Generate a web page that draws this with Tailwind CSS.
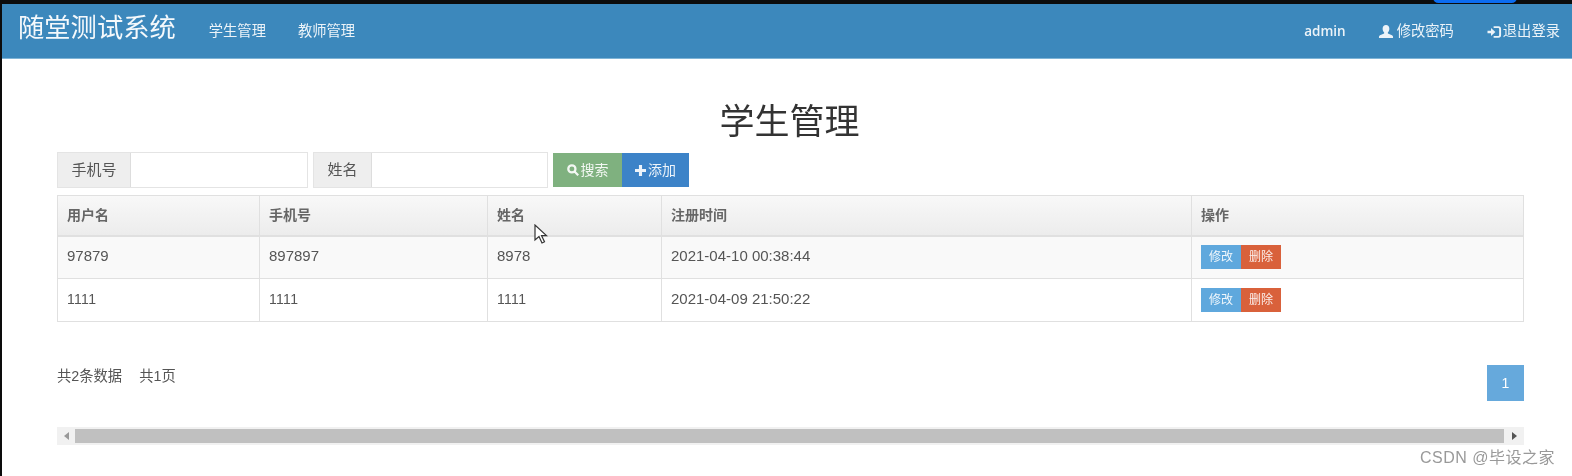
<!DOCTYPE html>
<html lang="zh-CN">

<head>
    <meta charset="UTF-8">
    <meta name="viewport" content="width=device-width, initial-scale=1.0">
    <title>学生管理</title>
    <script src="https://cdn.jsdelivr.net/npm/@tailwindcss/browser@4"></script>
</head>

<body class="bg-[#0c0c0c] font-['Liberation_Sans','Noto_Sans_CJK_SC',sans-serif] text-[#555]">
    <div class="relative w-[1572px] h-[476px] overflow-hidden pt-[4px] pl-[2px] blur-[0.4px]">
        <!-- 顶部窗口边缘 -->
        <div class="absolute left-[1433px] top-[-8px] w-[84px] h-[11px] rounded-full bg-[#0b6cf0]"></div>

        <div class="bg-white h-[472px] flex flex-col">
            <!-- 导航栏 -->
            <nav class="h-[55px] shrink-0 bg-[#3c88bc] border-b border-[#7fb4d6] flex items-center text-[14.3px] text-white/90">
                <a class="ml-[16px] text-[26.300px] leading-none text-white/95 -mt-[5px]">随堂测试系统</a>
                <a class="ml-[33px] mt-[1px]">学生管理</a>
                <a class="ml-[32px] mt-[1px]">教师管理</a>
                <div class="ml-auto flex items-center pr-[12px] mt-[1px]">
                    <a class="font-['Open_Sans'] font-semibold text-[13.500px]">admin</a>
                    <a class="ml-[32px] flex items-center gap-[3px]">
                        <svg class="w-[16px] h-[15px]" viewBox="0 0 16 16" fill="currentColor">
                            <path d="M8 1c2.2 0 3.6 1.7 3.6 4 0 1.5-.6 3-1.6 3.8v1.2l4.4 1.9c.8.4 1.1 1 1.1 1.8V15H.5v-1.3c0-.8.3-1.4 1.1-1.800L6 10V8.800C5 8 4.400 6.500 4.400 5 4.400 2.700 5.800 1 8 1z" />
                        </svg>
                        修改密码
                    </a>
                    <a class="ml-[33px] flex items-center gap-[1px]">
                        <svg class="w-[15px] h-[14px]" viewBox="0 0 16 16" fill="currentColor">
                            <path d="M0 6.500h4V3.500L9 8l-5 4.500v-3H0z" />
                            <path d="M7 1.500h5.500A3 3 0 0 1 15.500 4.500v7a3 3 0 0 1-3 3H7v-2h5.300a1 1 0 0 0 1-1V4.500a1 1 0 0 0-1-1H7z" />
                        </svg>
                        退出登录
                    </a>
                </div>
            </nav>

            <div class="pl-[55px] pr-[48px] flex flex-col">
                <h1 class="text-[35px] leading-[40px] font-normal text-[#333] text-center mt-[43px] pr-[2px]">学生管理</h1>

                <!-- 搜索栏 -->
                <div class="mt-[10px] flex items-stretch h-[36px] text-[14px]">
                    <div class="w-[251px] flex border border-[#e4e4e4]">
                        <span class="w-[73px] bg-[#eeeeee] border-r border-[#dddddd] flex items-center justify-center text-[15px]">手机号</span>
                        <input class="flex-1 min-w-0 bg-white">
                    </div>
                    <div class="w-[235px] ml-[5px] flex border border-[#e4e4e4]">
                        <span class="w-[58px] bg-[#eeeeee] border-r border-[#dddddd] flex items-center justify-center text-[15px]">姓名</span>
                        <input class="flex-1 min-w-0 bg-white">
                    </div>
                    <button class="w-[69px] ml-[5px] my-[1px] bg-[#7fb17f] text-white/90 flex items-center justify-center gap-[2px]">
                        <svg class="w-[12px] h-[12px]" viewBox="0 0 16 16" fill="none" stroke="currentColor" stroke-width="3">
                            <circle cx="6.500" cy="6.500" r="4.800" />
                            <path d="M10 10l5 5" />
                        </svg>
                        搜索
                    </button>
                    <button class="w-[67px] my-[1px] bg-[#3c83c8] text-white/90 flex items-center justify-center gap-[2px]">
                        <svg class="w-[11px] h-[11px]" viewBox="0 0 12 12" fill="currentColor">
                            <path d="M4.300 0h3.400v4.300H12v3.400H7.700V12H4.300V7.700H0V4.300h4.300z" />
                        </svg>
                        添加
                    </button>
                </div>

                <!-- 学生列表 -->
                <table class="mt-[7px] w-[1467px] table-fixed border-collapse text-[15px]">
                    <colgroup>
                        <col class="w-[202px]">
                        <col class="w-[228px]">
                        <col class="w-[174px]">
                        <col class="w-[530px]">
                        <col>
                    </colgroup>
                    <thead>
                        <tr class="h-[40px] bg-linear-to-b from-[#f8f8f8] to-[#ececec] text-left">
                            <th class="border border-[#e0e0e0] border-b-2 px-[9px] font-bold text-[14px] text-[#666]">用户名</th>
                            <th class="border border-[#e0e0e0] border-b-2 px-[9px] font-bold text-[14px] text-[#666]">手机号</th>
                            <th class="border border-[#e0e0e0] border-b-2 px-[9px] font-bold text-[14px] text-[#666]">姓名</th>
                            <th class="border border-[#e0e0e0] border-b-2 px-[9px] font-bold text-[14px] text-[#666]">注册时间</th>
                            <th class="border border-[#e0e0e0] border-b-2 px-[9px] font-bold text-[14px] text-[#666]">操作</th>
                        </tr>
                    </thead>
                    <tbody>
                        <tr class="h-[43px] bg-[#f9f9f9]">
                            <td class="border border-[#e0e0e0] px-[9px] pb-[2px]">97879</td>
                            <td class="border border-[#e0e0e0] px-[9px] pb-[2px]">897897</td>
                            <td class="border border-[#e0e0e0] px-[9px] pb-[2px]">8978</td>
                            <td class="border border-[#e0e0e0] px-[9px] pb-[2px]">2021-04-10 00:38:44</td>
                            <td class="border border-[#e0e0e0] px-[9px]">
                                <div class="flex h-[24px] text-[12px] text-white/90">
                                    <span class="w-[40px] bg-[#5fa8dd] flex items-center justify-center">修改</span>
                                    <span class="w-[40px] bg-[#d9613b] flex items-center justify-center">删除</span>
                                </div>
                            </td>
                        </tr>
                        <tr class="h-[43px] bg-white">
                            <td class="border border-[#e0e0e0] px-[9px] pb-[2px] text-[14px] tracking-[0.3px]">1111</td>
                            <td class="border border-[#e0e0e0] px-[9px] pb-[2px] text-[14px] tracking-[0.3px]">1111</td>
                            <td class="border border-[#e0e0e0] px-[9px] pb-[2px] text-[14px] tracking-[0.3px]">1111</td>
                            <td class="border border-[#e0e0e0] px-[9px] pb-[2px]">2021-04-09 21:50:22</td>
                            <td class="border border-[#e0e0e0] px-[9px]">
                                <div class="flex h-[24px] text-[12px] text-white/90">
                                    <span class="w-[40px] bg-[#5fa8dd] flex items-center justify-center">修改</span>
                                    <span class="w-[40px] bg-[#d9613b] flex items-center justify-center">删除</span>
                                </div>
                            </td>
                        </tr>
                    </tbody>
                </table>

                <!-- 分页 -->
                <div class="mt-[43px] flex items-start justify-between text-[14.300px]">
                    <div class="flex gap-[17px] mt-[1px]">
                        <span>共2条数据</span>
                        <span>共1页</span>
                    </div>
                    <span class="w-[37px] h-[36px] bg-[#66a9dc] text-white text-[14px] flex items-center justify-center">1</span>
                </div>

                <!-- 横向滚动条 -->
                <div class="mt-[26px] h-[18px] bg-[#f1f1f1] flex items-center">
                    <span class="w-[18px] flex justify-center"><span class="border-y-[4px] border-r-[5px] border-y-transparent border-r-[#999]"></span></span>
                    <span class="flex-1 h-[14px] bg-[#c0c0c0]"></span>
                    <span class="w-[20px] flex justify-center"><span class="border-y-[4px] border-l-[5px] border-y-transparent border-l-[#555]"></span></span>
                </div>
            </div>
        </div>

        <!-- 鼠标指针 -->
        <svg class="absolute left-[534px] top-[224px] w-[14px] h-[21px]" viewBox="0 0 14 21">
            <path d="M1 1v15l4-3.500 3 6.500 2.500-1.200-3-6.200H12.500z" fill="#fff" stroke="#333" stroke-width="1.200" />
        </svg>

        <!-- 水印 -->
        <span class="absolute left-[1420px] top-[448px] text-[16px] leading-[20px] text-[#999] tracking-[0.5px]">CSDN @毕设之家</span>
    </div>
</body>

</html>
